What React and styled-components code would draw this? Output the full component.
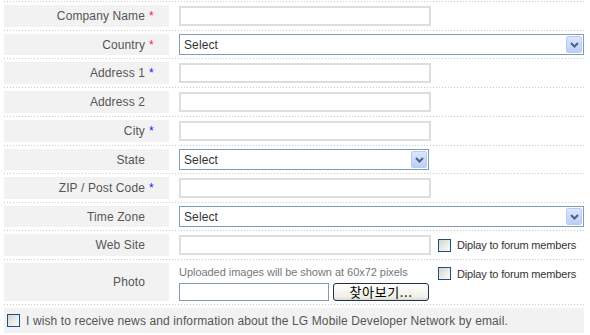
import React from 'react';
import styled, { createGlobalStyle } from 'styled-components';

const GlobalStyle = createGlobalStyle`
  body {
    margin: 0;
    background: #fff;
    font-family: 'Liberation Sans', Arial, sans-serif;
  }
`;

const dots = `
  background-image: linear-gradient(to right, #c9c9c9 1px, transparent 1px);
  background-size: 3px 1px;
  background-repeat: repeat-x;
`;

const Form = styled.div`
  width: 580px;
  margin-left: 4px;
  padding-top: 1px;
`;

const TopRule = styled.div`
  height: 1px;
  ${dots}
`;

const Row = styled.div`
  display: grid;
  grid-template-columns: 165px 1fr;
  column-gap: 10px;
  padding: 3px 0 4px;
  ${dots}
  background-position: left bottom;
`;

const Label = styled.div`
  display: flex;
  align-items: center;
  justify-content: flex-end;
  padding-right: 14px;
  background: #f2f2f2;
  color: #555;
  font-size: 12px;
  letter-spacing: 0.12px;
`;

const Star = styled.span`
  width: 10px;
  padding-left: 4px;
  box-sizing: border-box;
  color: ${(p) => (p.$blue ? '#1a1aff' : '#f0245a')};
`;

const Field = styled.div`
  display: flex;
  align-items: center;
`;

const TextInput = styled.div`
  box-sizing: border-box;
  width: 252px;
  height: 20px;
  margin: 1px 0;
  border: 2px solid #dedede;
  background: #fff;
`;

const SelectBox = styled.div`
  box-sizing: border-box;
  width: ${(p) => (p.$wide ? '405px' : '250px')};
  height: 21px;
  border: 1px solid #7f9db9;
  background: #fff;
  display: flex;
  align-items: center;
  justify-content: space-between;
  padding: 1px 1px 1px 4px;
  font-size: 12px;
  letter-spacing: 0.12px;
  color: #333;
`;

const DropButton = styled.span`
  box-sizing: border-box;
  width: 16px;
  height: 17px;
  border: 1px solid #b8cbf4;
  border-radius: 2px;
  background: linear-gradient(#dce6fe, #bccff8);
  display: flex;
  align-items: center;
  justify-content: center;
`;

const Check = styled.span`
  box-sizing: border-box;
  flex: none;
  width: 13px;
  height: 13px;
  border: 1px solid #1c5180;
  background: linear-gradient(135deg, #d6d6cf, #fcfcfb);
`;

const Option = styled.div`
  display: flex;
  align-items: center;
  gap: 6px;
  margin-left: 7px;
  font-size: 11px;
  letter-spacing: -0.17px;
  color: #333;
  align-self: ${(p) => (p.$top ? 'flex-start' : 'center')};
  margin-top: ${(p) => (p.$top ? '4px' : '0')};
`;

const PhotoLabel = styled(Label)`
  height: 38px;
`;

const PhotoColumn = styled.div`
  display: flex;
  flex-direction: column;
  width: 252px;
`;

const Hint = styled.div`
  height: 19px;
  line-height: 19px;
  font-size: 11px;
  letter-spacing: -0.04px;
  color: #777;
`;

const FileRow = styled.div`
  display: flex;
  align-items: center;
  gap: 4px;
  height: 19px;
`;

const FileBox = styled.div`
  box-sizing: border-box;
  width: 150px;
  height: 18px;
  border: 1px solid #7f9db9;
  background: #fff;
`;

const BrowseButton = styled.div`
  box-sizing: border-box;
  width: 96px;
  height: 18px;
  border: 1px solid #1d3350;
  border-radius: 3px;
  background: linear-gradient(#ffffff, #f0efe8 80%, #dcdad0);
  display: flex;
  align-items: center;
  justify-content: center;
  font-family: 'Noto Sans CJK KR', 'Liberation Sans', sans-serif;
  font-size: 13px;
  letter-spacing: 0.6px;
  color: #000;
  line-height: 1;
`;

const NewsRow = styled.div`
  display: flex;
  align-items: center;
  gap: 6px;
  height: 25px;
  margin-top: 3px;
  padding-left: 3px;
  background: #f2f2f2;
  color: #555;
  font-size: 12px;
  letter-spacing: 0.12px;
`;

const Chevron = () => (
  <svg width="9" height="6" viewBox="0 0 9 6">
    <path d="M1 1 L4.5 4.5 L8 1" fill="none" stroke="#4d6185" strokeWidth="2" />
  </svg>
);

const Select = ({ wide }) => (
  <SelectBox $wide={wide}>
    <span>Select</span>
    <DropButton>
      <Chevron />
    </DropButton>
  </SelectBox>
);

const rows = [
  { label: 'Company Name', star: 'red' },
  { label: 'Country', star: 'red', select: 'wide' },
  { label: 'Address 1', star: 'blue' },
  { label: 'Address 2' },
  { label: 'City', star: 'blue' },
  { label: 'State', select: 'narrow' },
  { label: 'ZIP / Post Code', star: 'blue' },
  { label: 'Time Zone', select: 'wide' },
];

const App = () => (
  <>
    <GlobalStyle />
    <Form>
      <TopRule />
      {rows.map((r) => (
        <Row key={r.label}>
          <Label>
            {r.label}
            <Star $blue={r.star === 'blue'}>{r.star ? '*' : ''}</Star>
          </Label>
          <Field>
            {r.select ? <Select wide={r.select === 'wide'} /> : <TextInput />}
          </Field>
        </Row>
      ))}
      <Row>
        <Label>
          Web Site
          <Star />
        </Label>
        <Field>
          <TextInput />
          <Option>
            <Check />
            Diplay to forum members
          </Option>
        </Field>
      </Row>
      <Row>
        <PhotoLabel>
          Photo
          <Star />
        </PhotoLabel>
        <Field>
          <PhotoColumn>
            <Hint>Uploaded images will be shown at 60x72 pixels</Hint>
            <FileRow>
              <FileBox />
              <BrowseButton>찾아보기...</BrowseButton>
            </FileRow>
          </PhotoColumn>
          <Option $top>
            <Check />
            Diplay to forum members
          </Option>
        </Field>
      </Row>
      <NewsRow>
        <Check />
        I wish to receive news and information about the LG Mobile Developer Network by email.
      </NewsRow>
    </Form>
  </>
);

export default App;
